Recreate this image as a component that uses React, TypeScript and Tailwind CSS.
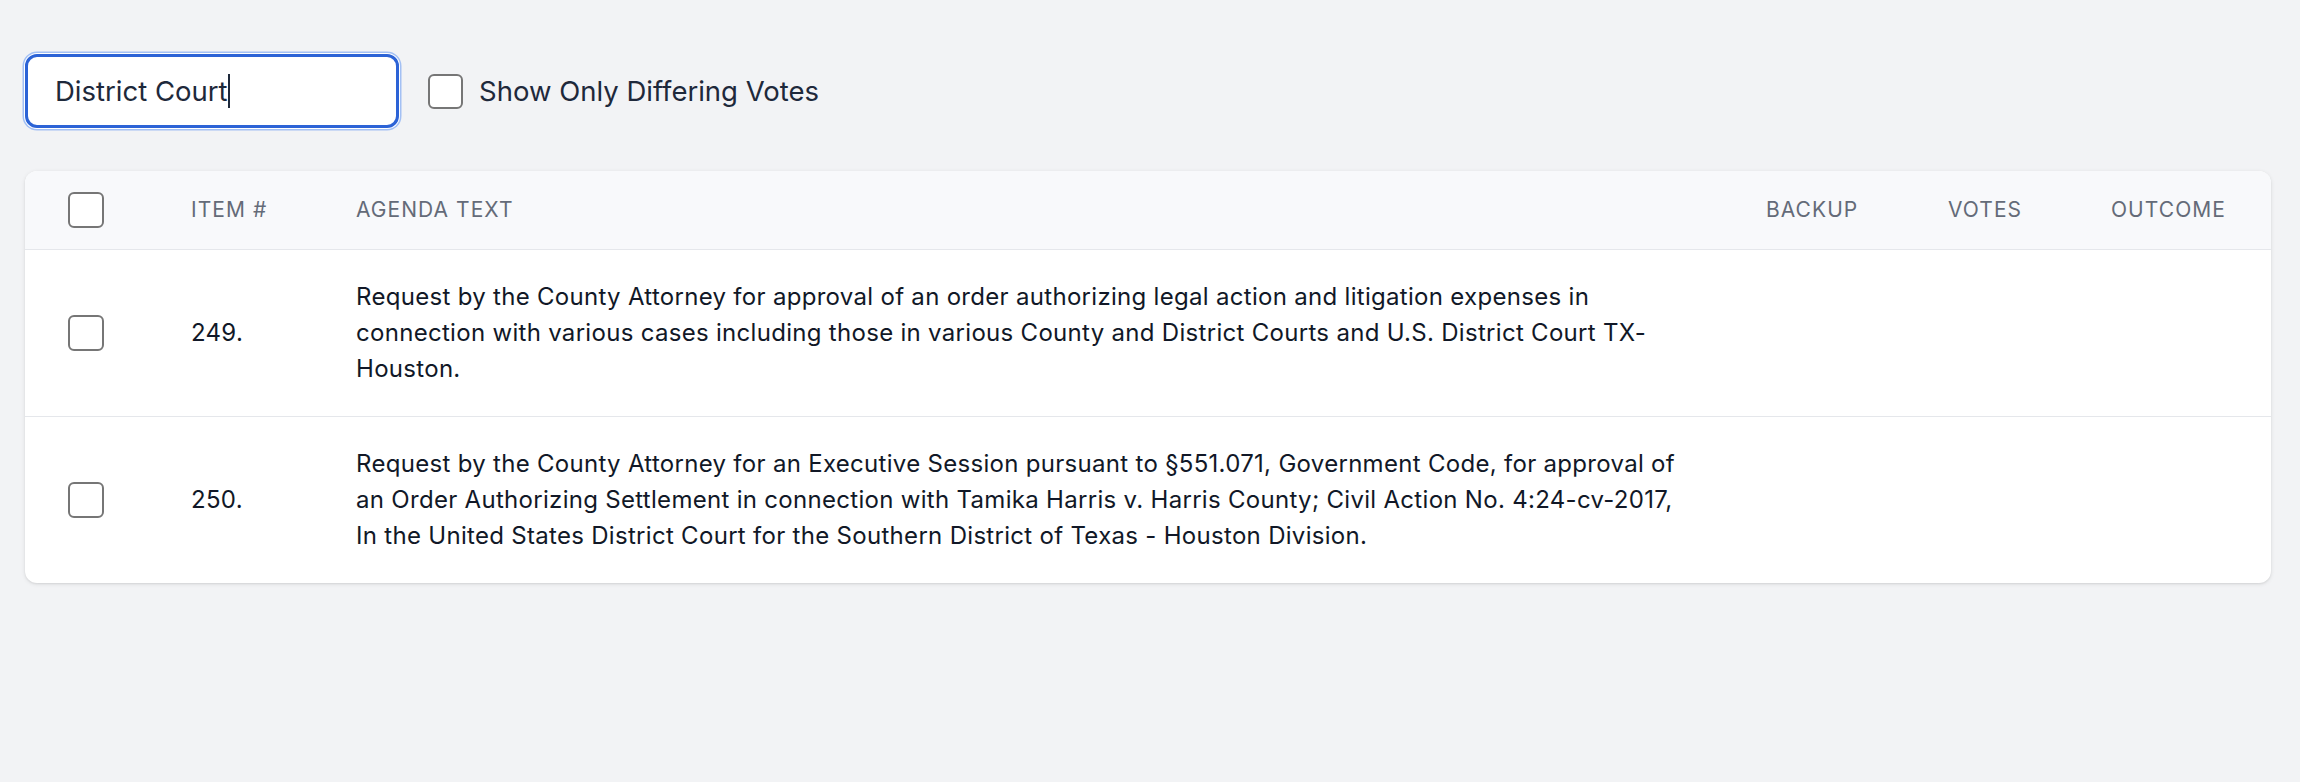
import React from 'react'

type Row = { id: string; num: string; text: string }

const rows: Row[] = [
  {
    id: '249',
    num: '249.',
    text: 'Request by the County Attorney for approval of an order authorizing legal action and litigation expenses in connection with various cases including those in various County and District Courts and U.S. District Court TX-Houston.',
  },
  {
    id: '250',
    num: '250.',
    text: 'Request by the County Attorney for an Executive Session pursuant to §551.071, Government Code, for approval of an Order Authorizing Settlement in connection with Tamika Harris v. Harris County; Civil Action No. 4:24-cv-2017, In the United States District Court for the Southern District of Texas - Houston Division.',
  },
]

const cols = 'grid grid-cols-[166px_165px_1410px_182px_163px_1fr]'

function Box() {
  return (
    <span className="block w-[36px] h-[36px] rounded-[6px] border-[2px] border-[#767676] bg-white" />
  )
}

export default function App() {
  return (
    <div className="flex min-h-[782px] w-full font-['Inter','Noto_Sans',sans-serif]">
      <main className="flex-1 bg-[#f2f3f5] pl-[25px] pr-[29px] pt-[54px]">
        {/* filters */}
        <div className="flex items-center">
          <div className="flex items-center w-[374px] h-[74px] rounded-[12px] border-[3px] border-[#2c63d6] bg-white pl-[27px] shadow-[0_0_0_1px_#ffffff,0_0_0_2.5px_#a3c0f4]">
            <span className="text-[27.5px] text-[#1e293b] leading-none pt-[2px]">District Court</span>
            <span className="inline-block w-[2px] h-[34px] bg-[#1e293b]" />
          </div>
          <label className="flex items-center ml-[29px] gap-[16px]">
            <span className="block w-[35px] h-[35px] rounded-[6px] border-[2px] border-[#767676] bg-white" />
            <span className="text-[27.5px] text-[#1e293b] pt-[2px]">Show Only Differing Votes</span>
          </label>
        </div>

        {/* table */}
        <div className="mt-[43px] rounded-[12px] bg-white overflow-hidden shadow-[0_1px_4px_rgba(0,0,0,0.1),0_1px_2px_rgba(0,0,0,0.06)]">
          <div className={`${cols} h-[79px] items-center bg-[#f8f9fb] border-b border-[#e5e7eb] text-[21px] tracking-wider text-[#646b78] uppercase`}>
            <div className="pl-[43px]">
              <Box />
            </div>
            <div>Item #</div>
            <div>Agenda Text</div>
            <div>Backup</div>
            <div>Votes</div>
            <div>Outcome</div>
          </div>
          {rows.map((r, i) => (
            <div
              key={r.id}
              className={`${cols} items-center text-[24px] leading-[36px] tracking-[0.3px] text-[#111827] ${i < rows.length - 1 ? 'border-b border-[#e5e7eb]' : ''}`}
            >
              <div className="pl-[43px]">
                <Box />
              </div>
              <div>{r.num}</div>
              <div className="py-[29px] max-w-[1332px]">{r.text}</div>
              <div />
              <div />
              <div />
            </div>
          ))}
        </div>
      </main>
      <div className="w-[12px] bg-white" />
    </div>
  )
}
